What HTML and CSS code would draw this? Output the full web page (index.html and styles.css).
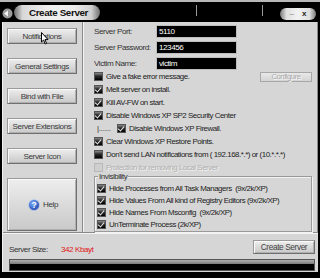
FILE: index.html
```html
<!DOCTYPE html>
<html>
<head>
<meta charset="utf-8">
<link rel="stylesheet" href="styles.css">
</head>
<body>
<div class="win">
  <div class="titlebar">
    <div class="appicon"><svg width="11" height="11" viewBox="0 0 11 11"><circle cx="5.5" cy="5.5" r="5" fill="#9a9a9a"/><path d="M2 5.5 L6 2.5 L6 8.5 Z" fill="#f2f2f2"/></svg></div>
    <div class="title-pill">Create Server</div>
    <div class="tsep tsep1"></div>
    <div class="tsep tsep2"></div>
    <div class="ctrl-pill"><span class="min">_</span><span class="cls">x</span></div>
  </div>
  <div class="body">
    <div class="main">
      <div class="side">
        <div class="btn">Notifications<svg class="cursor" width="8" height="13" viewBox="0 0 8 13"><path d="M0.5 0.5 L0.5 10 L2.6 8 L4.2 12 L5.6 11.4 L4 7.6 L7 7.6 Z" fill="#fff" stroke="#000" stroke-width="1"/></svg></div>
        <div class="btn">General Settings</div>
        <div class="btn">Bind with File</div>
        <div class="btn">Server Extensions</div>
        <div class="btn">Server Icon</div>
        <div class="btn help"><svg width="12" height="12" viewBox="0 0 12 12"><defs><radialGradient id="hg" cx="0.4" cy="0.35" r="0.7"><stop offset="0" stop-color="#7fb0ff"/><stop offset="1" stop-color="#1a3fa8"/></radialGradient></defs><circle cx="6" cy="6" r="5.5" fill="url(#hg)" stroke="#c8d4ea" stroke-width="0.8"/><text x="6" y="9" text-anchor="middle" font-family="Liberation Sans, sans-serif" font-weight="bold" font-size="8.5" fill="#fff">?</text></svg><span>Help</span></div>
      </div>
      <div class="content">
        <div class="field"><span class="lbl">Server Port:</span><span class="inp">5110</span></div>
        <div class="field"><span class="lbl">Server Password:</span><span class="inp">123456</span></div>
        <div class="field"><span class="lbl">Victim Name:</span><span class="inp">victim</span></div>
        <div class="chk first"><span class="box"></span><span>Give a fake error message.</span><span class="cfg">Configure</span></div>
        <div class="chk"><span class="box on"></span><span>Melt server on install.</span></div>
        <div class="chk"><span class="box on"></span><span>Kill AV-FW on start.</span></div>
        <div class="chk"><span class="box on"></span><span>Disable Windows XP SP2 Security Center</span></div>
        <div class="chk sub"><span class="tree">|......</span><span class="box on"></span><span>Disable Windows XP Firewall.</span></div>
        <div class="chk"><span class="box on"></span><span>Clear Windows XP Restore Points.</span></div>
        <div class="chk"><span class="box"></span><span>Don't send LAN notifications from ( 192.168.*.*) or (10.*.*.*)</span></div>
        <div class="chk dis"><span class="box"></span><span>Protection for removing Local Server</span></div>
        <div class="group">
          <span class="legend">Invisibility</span>
          <div class="chk g"><span class="box on"></span><span>Hide Processes from All Task Managers&nbsp; (9x/2k/XP)</span></div>
          <div class="chk g"><span class="box on"></span><span>Hide Values From All kind of Registry Editors (9x/2k/XP)</span></div>
          <div class="chk g"><span class="box on"></span><span>Hide Names From Msconfig&nbsp; (9x/2k/XP)</span></div>
          <div class="chk g"><span class="box on"></span><span>UnTerminate Process (2k/XP)</span></div>
        </div>
      </div>
    </div>
    <div class="footer">
      <div class="size-row">
        <span class="sz">Server Size:</span>
        <span class="red">342 Kbayt</span>
        <div class="btn create">Create Server</div>
      </div>
      <div class="progress"></div>
    </div>
  </div>
</div>
</body>
</html>
```
FILE: styles.css
```css
* { box-sizing: border-box; }
html, body { margin: 0; padding: 0; }
body {
  width: 320px;
  height: 278px;
  overflow: hidden;
  background: #000;
  font-family: "Liberation Sans", Arial, sans-serif;
  font-size: 7.9px;
  letter-spacing: -0.45px;
  color: #2a2a2a;
  white-space: nowrap;
}
.win {
  width: 320px;
  height: 278px;
  background: #000;
  border-top: 2px solid #b8b8b8;
}
.titlebar {
  height: 20px;
  display: flex;
  align-items: center;
  background: #000;
}
.appicon {
  width: 11px;
  height: 11px;
  margin-left: 2px;
  margin-top: 2px;
  display: flex;
}
.title-pill {
  margin-left: 1px;
  width: 86px;
  height: 15px;
  border-radius: 8px;
  background: linear-gradient(to right, #6e6e6e 0%, #d8d8d8 10%, #f0f0f0 40%, #ececec 70%, #cfcfcf 90%, #707070 100%);
  font-weight: bold;
  font-size: 9.8px;
  letter-spacing: -0.35px;
  color: #111;
  display: flex;
  align-items: center;
  justify-content: center;
  padding-left: 3px;
}
.tsep {
  width: 1px;
  height: 11px;
  background: #9a9a9a;
  margin-top: -4px;
}
.tsep1 { margin-left: 96px; }
.tsep2 { margin-left: 65px; }
.ctrl-pill {
  margin-left: 17px;
  width: 36px;
  height: 12px;
  margin-top: 3px;
  border-radius: 6px;
  background: linear-gradient(to right, #7a7a7a 0%, #e0e0e0 18%, #f2f2f2 50%, #dedede 82%, #7a7a7a 100%);
  display: flex;
  align-items: center;
  justify-content: center;
  gap: 8px;
  font-size: 8px;
  font-weight: bold;
  color: #222;
  letter-spacing: 0;
}
.ctrl-pill .min { margin-top: -4px; }
.body {
  margin: 0 2px;
  height: 250px;
  background: #d6d6d6;
  display: flex;
  flex-direction: column;
  border-left: 1px solid #f0f0f0;
}
.main {
  height: 211px;
  display: flex;
  border-bottom: 1px solid #8a8a8a;
  box-shadow: 0 1px 0 #f4f4f4;
}
.side {
  width: 80px;
  padding: 6px 0 0 4px;
  display: flex;
  flex-direction: column;
  gap: 14px;
  border-right: 1px solid #8a8a8a;
  box-shadow: 1px 0 0 #f4f4f4;
}
.btn {
  position: relative;
  width: 70px;
  height: 16px;
  border: 1px solid #6f6f6f;
  border-top-color: #9a9a9a;
  border-left-color: #9a9a9a;
  background: linear-gradient(#eeeeee, #d9d9d9 55%, #c9c9c9);
  box-shadow: inset 1px 1px 0 #fafafa, inset -1px -1px 0 #b0b0b0;
  display: flex;
  align-items: center;
  justify-content: center;
  color: #3a3a3a;
  font-size: 8.1px;
  letter-spacing: -0.4px;
}
.btn.help {
  height: 53px;
  gap: 3px;
  padding-left: 2px;
}
.cursor {
  position: absolute;
  left: 33px;
  top: 3px;
}
.content {
  flex: 1;
  padding: 3px 3px 0 11px;
  display: flex;
  flex-direction: column;
  border-right: 1px solid #8a8a8a;
}
.field {
  height: 13px;
  display: flex;
  align-items: center;
  margin-bottom: 3px;
}
.field:nth-child(3) { margin-bottom: 0; }
.lbl {
  width: 62px;
  color: #333;
  font-size: 8.1px;
}
.inp {
  width: 81px;
  height: 13px;
  background: #000;
  border: 1px solid #bdbdbd;
  color: #fff;
  font-size: 8.1px;
  padding-left: 2px;
  display: flex;
  align-items: center;
}
.chk {
  height: 13px;
  display: flex;
  align-items: center;
  color: #222;
}
.box {
  width: 9px;
  height: 9px;
  margin-right: 3px;
  flex: none;
  background: linear-gradient(#8a8a8a, #2a2a2a 45%, #000);
  border: 1px solid #555;
  position: relative;
}
.box.on::after {
  content: "";
  position: absolute;
  left: 1px;
  top: 0px;
  width: 3px;
  height: 5px;
  border-right: 1.6px solid #e6e6e6;
  border-bottom: 1.6px solid #e6e6e6;
  transform: rotate(40deg);
}
.cfg {
  margin-left: auto;
  margin-right: 2px;
  width: 52px;
  height: 10px;
  border: 1px solid #a8a8a8;
  background: linear-gradient(#e8e8e8, #d4d4d4);
  color: #a9a9a9;
  text-shadow: 1px 1px 0 #fafafa;
  display: flex;
  align-items: center;
  justify-content: center;
  font-size: 7.6px;
}
.sub .tree {
  margin-left: 3px;
  width: 20px;
  letter-spacing: -0.2px;
  color: #333;
}
.dis { color: #b0b0b0; text-shadow: 1px 1px 0 #f2f2f2; }
.dis .box { background: #cfcfcf; border-color: #b8b8b8; }
.group {
  position: relative;
  margin-top: 2px;
  margin-right: 2px;
  height: 56px;
  border: 1px solid #9a9a9a;
  box-shadow: inset 1px 1px 0 #f2f2f2, 1px 1px 0 #f2f2f2;
  padding: 5px 0 0 2px;
}
.legend {
  position: absolute;
  top: -5px;
  left: 3px;
  background: #d6d6d6;
  padding: 0 1px;
  color: #333;
  line-height: 9px;
}
.chk.g { height: 12px; }
.footer {
  flex: 1;
  padding: 7px 3px 0 6px;
  display: flex;
  flex-direction: column;
}
.size-row {
  height: 14px;
  display: flex;
  align-items: center;
}
.sz { width: 52px; color: #333; font-size: 8.1px; margin-top: 5px; }
.red { color: #e01818; font-size: 8.1px; margin-top: 5px; }
.btn.create {
  margin-left: auto;
  width: 62px;
  height: 14px;
  font-size: 8.3px;
  color: #444;
}
.progress {
  margin-top: 5px;
  height: 12px;
  border: 1px solid #555;
  background: linear-gradient(#b0b0b0, #7a7a7a 40%, #000 45%, #000);
}
```
